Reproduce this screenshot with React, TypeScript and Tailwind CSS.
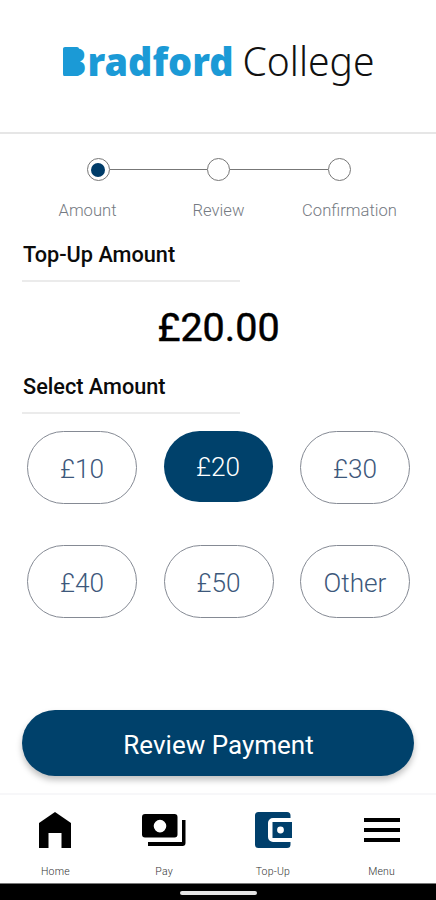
import React, { useState } from "react";

const steps = ["Amount", "Review", "Confirmation"];

const amounts = ["£10", "£20", "£30", "£40", "£50", "Other"];

const Logo: React.FC = () => (
  <svg width="436" height="132" viewBox="0 0 436 132" role="img">
    <g fill="#1b9ad6">
      <text
        y="76"
        fontFamily="Noto Sans, sans-serif"
        fontSize="39.500"
        fontWeight="900"
      >
        <tspan x="60.500" textLength="26" lengthAdjust="spacingAndGlyphs">
          B
        </tspan>
        <tspan x="87.500" textLength="146" lengthAdjust="spacingAndGlyphs">
          radford
        </tspan>
      </text>
      {/* solid fill over the counters of the B */}
      <rect x="63" y="47" width="16" height="29" rx="2" />
    </g>
    <text
      x="242.500"
      y="76"
      fill="#111"
      fontFamily="Noto Sans, sans-serif"
      fontSize="40"
      fontWeight="300"
      textLength="132"
      lengthAdjust="spacingAndGlyphs"
    >
      College
    </text>
  </svg>
);

const Stepper: React.FC = () => (
  <div className="flex h-[100px] flex-col items-center pt-[24px]">
    <div className="flex items-center pl-px">
      <div className="flex size-[23px] items-center justify-center rounded-full border-[1.5px] border-[#777]">
        <div className="size-[14px] rounded-full bg-[#003c69]" />
      </div>
      <div className="h-[1.5px] w-[97.500px] bg-[#777]" />
      <div className="size-[23px] rounded-full border-[1.5px] border-[#777]" />
      <div className="h-[1.5px] w-[97.500px] bg-[#777]" />
      <div className="size-[23px] rounded-full border-[1.5px] border-[#777]" />
    </div>
    <div className="mt-[19px] flex pl-px">
      {steps.map((step) => (
        <span
          key={step}
          className="w-[131px] text-center text-[16.6px] leading-[22px] font-light text-[#757a82]"
        >
          {step}
        </span>
      ))}
    </div>
  </div>
);

const SectionTitle: React.FC<{ title: string }> = ({ title }) => (
  <h2 className="ml-[22px] h-[48px] w-[218px] border-b-2 border-[#ebebeb] pt-[8px] pl-px text-[21.7px] leading-[26px] font-medium whitespace-nowrap text-[#0b0b0b]">
    {title}
  </h2>
);

const HomeIcon: React.FC = () => (
  <svg width="32" height="36" viewBox="0 0 32 36">
    <path d="M16 0 32 11v25h-9.500V21h-13v15H0V11z" />
  </svg>
);

const PayIcon: React.FC = () => (
  <svg width="44" height="34" viewBox="0 0 44 34">
    <path
      fillRule="evenodd"
      d="M3 1h29.500a3 3 0 0 1 3 3v17.500a3 3 0 0 1-3 3H3a3 3 0 0 1-3-3V4a3 3 0 0 1 3-3zm15 5.800a6.300 6.300 0 1 0 0 12.600 6.300 6.300 0 0 0 0-12.600z"
    />
    <path d="M40 7h3.500v23a3 3 0 0 1-3 3H6v-4h34z" />
  </svg>
);

const WalletIcon: React.FC = () => (
  <svg width="38" height="36" viewBox="-1 0 38 36" fill="#003f6b">
    <path d="M3.500 0H32a3.500 3.500 0 0 1 3.500 3.500V6H18a5 5 0 0 0-5 5v14a5 5 0 0 0 5 5h17.500v2.500A3.500 3.500 0 0 1 32 36H3.500A3.500 3.500 0 0 1 0 32.500v-29A3.500 3.500 0 0 1 3.500 0z" />
    <path
      fillRule="evenodd"
      d="M17.500 10H37v16H17.500zm8 4.600a3.400 3.400 0 1 0 0 6.800 3.400 3.400 0 0 0 0-6.800z"
    />
  </svg>
);

const MenuIcon: React.FC = () => (
  <svg width="36" height="26" viewBox="0 0 36 26">
    <path d="M0 1h36v4H0zM0 11h36v4H0zM0 21h36v4H0z" />
  </svg>
);

const navItems = [
  { label: "Home", icon: <HomeIcon /> },
  { label: "Pay", icon: <PayIcon /> },
  { label: "Top-Up", icon: <WalletIcon /> },
  { label: "Menu", icon: <MenuIcon /> },
];

const App: React.FC = () => {
  const [selected, setSelected] = useState("£20");

  return (
    <div className="flex h-[900px] w-[436px] flex-col overflow-hidden bg-white font-['Roboto',sans-serif]">
      <header className="h-[134px] shrink-0 border-b-2 border-[#e6e6e6]">
        <Logo />
      </header>

      <main className="h-[659px] shrink-0">
        <Stepper />
        <SectionTitle title="Top-Up Amount" />
        <p className="h-[84px] pt-[21px] pl-px text-center text-[39.5px] leading-[50px] text-black [-webkit-text-stroke:0.5px_black]">
          £20.00
        </p>
        <SectionTitle title="Select Amount" />
        <div className="grid grid-cols-3 gap-x-[26.5px] gap-y-[41px] pt-[17px] pr-[26px] pl-[27px]">
          {amounts.map((amount) => (
            <button
              key={amount}
              onClick={() => setSelected(amount)}
              className={
                amount === selected
                  ? "h-[71px] w-[109px] rounded-full bg-[#00416b] pt-[3px] text-[26.2px] font-light text-white"
                  : "h-[73px] w-[110px] rounded-full border border-[#858a94] pt-[4px] text-[26.2px] font-light text-[#3d587b]"
              }
            >
              {amount}
            </button>
          ))}
        </div>
        <button className="mt-[92px] ml-[22px] h-[66px] w-[392px] rounded-full bg-[#00416b] pt-[4px] pl-[7px] pr-[6px] text-[26px] text-white shadow-[0_4px_6px_rgba(0,0,0,0.25)]">
          Review Payment
        </button>
      </main>

      <nav className="grid h-[91px] shrink-0 grid-cols-4 border-t-2 border-b border-t-[#f7f7f9] border-b-[#777] pl-px">
        {navItems.map((item) => (
          <a key={item.label} className="flex flex-col items-center">
            <span className="flex h-[70px] items-center">{item.icon}</span>
            <span className="pt-px text-[10.5px] leading-[12px] font-light tracking-[0.2px] text-[#333]">
              {item.label}
            </span>
          </a>
        ))}
      </nav>
      <div className="flex h-[16px] shrink-0 justify-center bg-black pt-[7px]">
        <div className="h-[4px] w-[77px] rounded-full bg-[#e4e4e4]" />
      </div>
    </div>
  );
};

export default App;
